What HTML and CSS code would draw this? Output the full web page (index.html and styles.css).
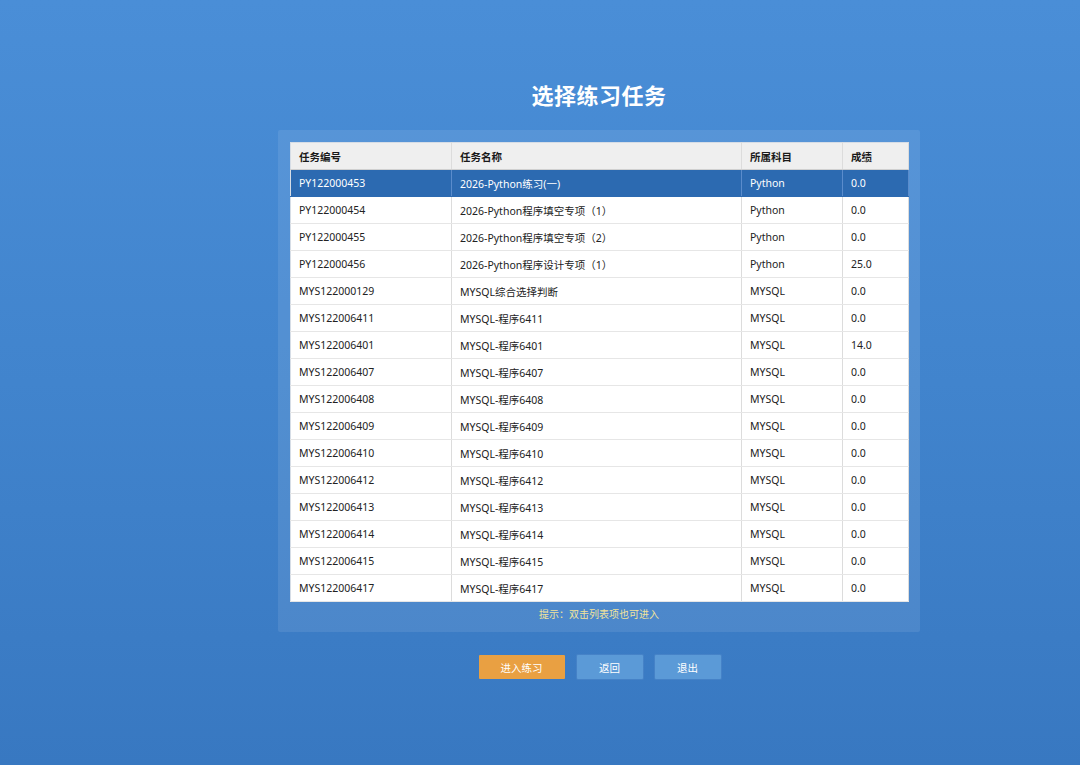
FILE: index.html
```html
<!DOCTYPE html>
<html lang="zh">
<head>
<meta charset="utf-8">
<link rel="stylesheet" href="styles.css">
</head>
<body>
<div class="page">
  <h1 class="title">选择练习任务</h1>
  <div class="panel">
    <table class="tasks">
      <colgroup>
        <col class="c1"><col class="c2"><col class="c3"><col class="c4">
      </colgroup>
      <thead>
        <tr><th>任务编号</th><th>任务名称</th><th>所属科目</th><th>成绩</th></tr>
      </thead>
      <tbody>
        <tr class="selected"><td>PY122000453</td><td>2026-Python练习(一)</td><td>Python</td><td>0.0</td></tr>
        <tr><td>PY122000454</td><td>2026-Python程序填空专项（1）</td><td>Python</td><td>0.0</td></tr>
        <tr><td>PY122000455</td><td>2026-Python程序填空专项（2）</td><td>Python</td><td>0.0</td></tr>
        <tr><td>PY122000456</td><td>2026-Python程序设计专项（1）</td><td>Python</td><td>25.0</td></tr>
        <tr><td>MYS122000129</td><td>MYSQL综合选择判断</td><td>MYSQL</td><td>0.0</td></tr>
        <tr><td>MYS122006411</td><td>MYSQL-程序6411</td><td>MYSQL</td><td>0.0</td></tr>
        <tr><td>MYS122006401</td><td>MYSQL-程序6401</td><td>MYSQL</td><td>14.0</td></tr>
        <tr><td>MYS122006407</td><td>MYSQL-程序6407</td><td>MYSQL</td><td>0.0</td></tr>
        <tr><td>MYS122006408</td><td>MYSQL-程序6408</td><td>MYSQL</td><td>0.0</td></tr>
        <tr><td>MYS122006409</td><td>MYSQL-程序6409</td><td>MYSQL</td><td>0.0</td></tr>
        <tr><td>MYS122006410</td><td>MYSQL-程序6410</td><td>MYSQL</td><td>0.0</td></tr>
        <tr><td>MYS122006412</td><td>MYSQL-程序6412</td><td>MYSQL</td><td>0.0</td></tr>
        <tr><td>MYS122006413</td><td>MYSQL-程序6413</td><td>MYSQL</td><td>0.0</td></tr>
        <tr><td>MYS122006414</td><td>MYSQL-程序6414</td><td>MYSQL</td><td>0.0</td></tr>
        <tr><td>MYS122006415</td><td>MYSQL-程序6415</td><td>MYSQL</td><td>0.0</td></tr>
        <tr><td>MYS122006417</td><td>MYSQL-程序6417</td><td>MYSQL</td><td>0.0</td></tr>
      </tbody>
    </table>
    <div class="hint">提示：双击列表项也可进入</div>
  </div>
  <div class="actions">
    <button class="btn btn-primary">进入练习</button>
    <button class="btn btn-secondary">返回</button>
    <button class="btn btn-secondary">退出</button>
  </div>
</div>
</body>
</html>
```
FILE: styles.css
```css
html, body {
  margin: 0;
  padding: 0;
  height: 100%;
}
body {
  background: linear-gradient(180deg, #4a8ed7 0%, #4184cd 50%, #3878c1 100%);
  font-family: "Noto Sans", "Noto Sans CJK SC", sans-serif;
  color: #222;
  width: 1080px;
  height: 765px;
  overflow: hidden;
}
.page {
  width: 642px;
  margin-left: 278px;
  padding-top: 85px;
  display: flex;
  flex-direction: column;
  align-items: stretch;
}
.title {
  margin: 0 0 27px 0;
  height: 18px;
  line-height: 18px;
  text-align: center;
  font-size: 22px;
  font-weight: 700;
  color: #ffffff;
  letter-spacing: 0.5px;
  font-family: "Noto Sans CJK SC", sans-serif;
}
.panel {
  background: rgba(255, 255, 255, 0.09);
  padding: 12px 12px 0 12px;
  height: 502px;
  box-sizing: border-box;
  border-radius: 2px;
}
.tasks {
  width: 618px;
  border-collapse: collapse;
  background: #ffffff;
  table-layout: fixed;
  font-size: 10.5px;
  border: 1px solid #d6dde6;
}
.c1 { width: 161px; }
.c2 { width: 290px; }
.c3 { width: 101px; }
.c4 { width: 66px; }
.tasks th,
.tasks td {
  height: 27px;
  padding: 0 0 0 8px;
  text-align: left;
  white-space: nowrap;
  overflow: hidden;
  border-right: 1px solid #dcdcdc;
  border-bottom: 1px solid #e6e6e6;
  box-sizing: border-box;
}
.tasks th {
  background: #efefef;
  font-weight: 700;
  color: #1a1a1a;
  height: 27px;
  border-bottom: 1px solid #d0d0d0;
}
.tasks td {
  color: #222;
}
.tasks tr.selected td {
  background: #2c6ab1;
  color: #ffffff;
  border-right-color: #5a8ccc;
  border-bottom-color: #2c6ab1;
}
.hint {
  text-align: center;
  color: #f2e49a;
  font-size: 10px;
  margin-top: 4px;
  line-height: 16px;
}
.actions {
  display: flex;
  justify-content: center;
  gap: 12px;
  margin-top: 23px;
  padding-left: 1px;
}
.btn {
  height: 24px;
  border: none;
  font-family: "Noto Sans CJK SC", sans-serif;
  font-size: 10.5px;
  color: #ffffff;
  padding: 0;
  border-radius: 1px;
  cursor: pointer;
}
.btn-primary {
  width: 86px;
  background: #e9a042;
}
.btn-secondary {
  width: 66px;
  background: #5b9ad7;
  box-shadow: 0 0 0 1px rgba(255, 255, 255, 0.06);
}
```
